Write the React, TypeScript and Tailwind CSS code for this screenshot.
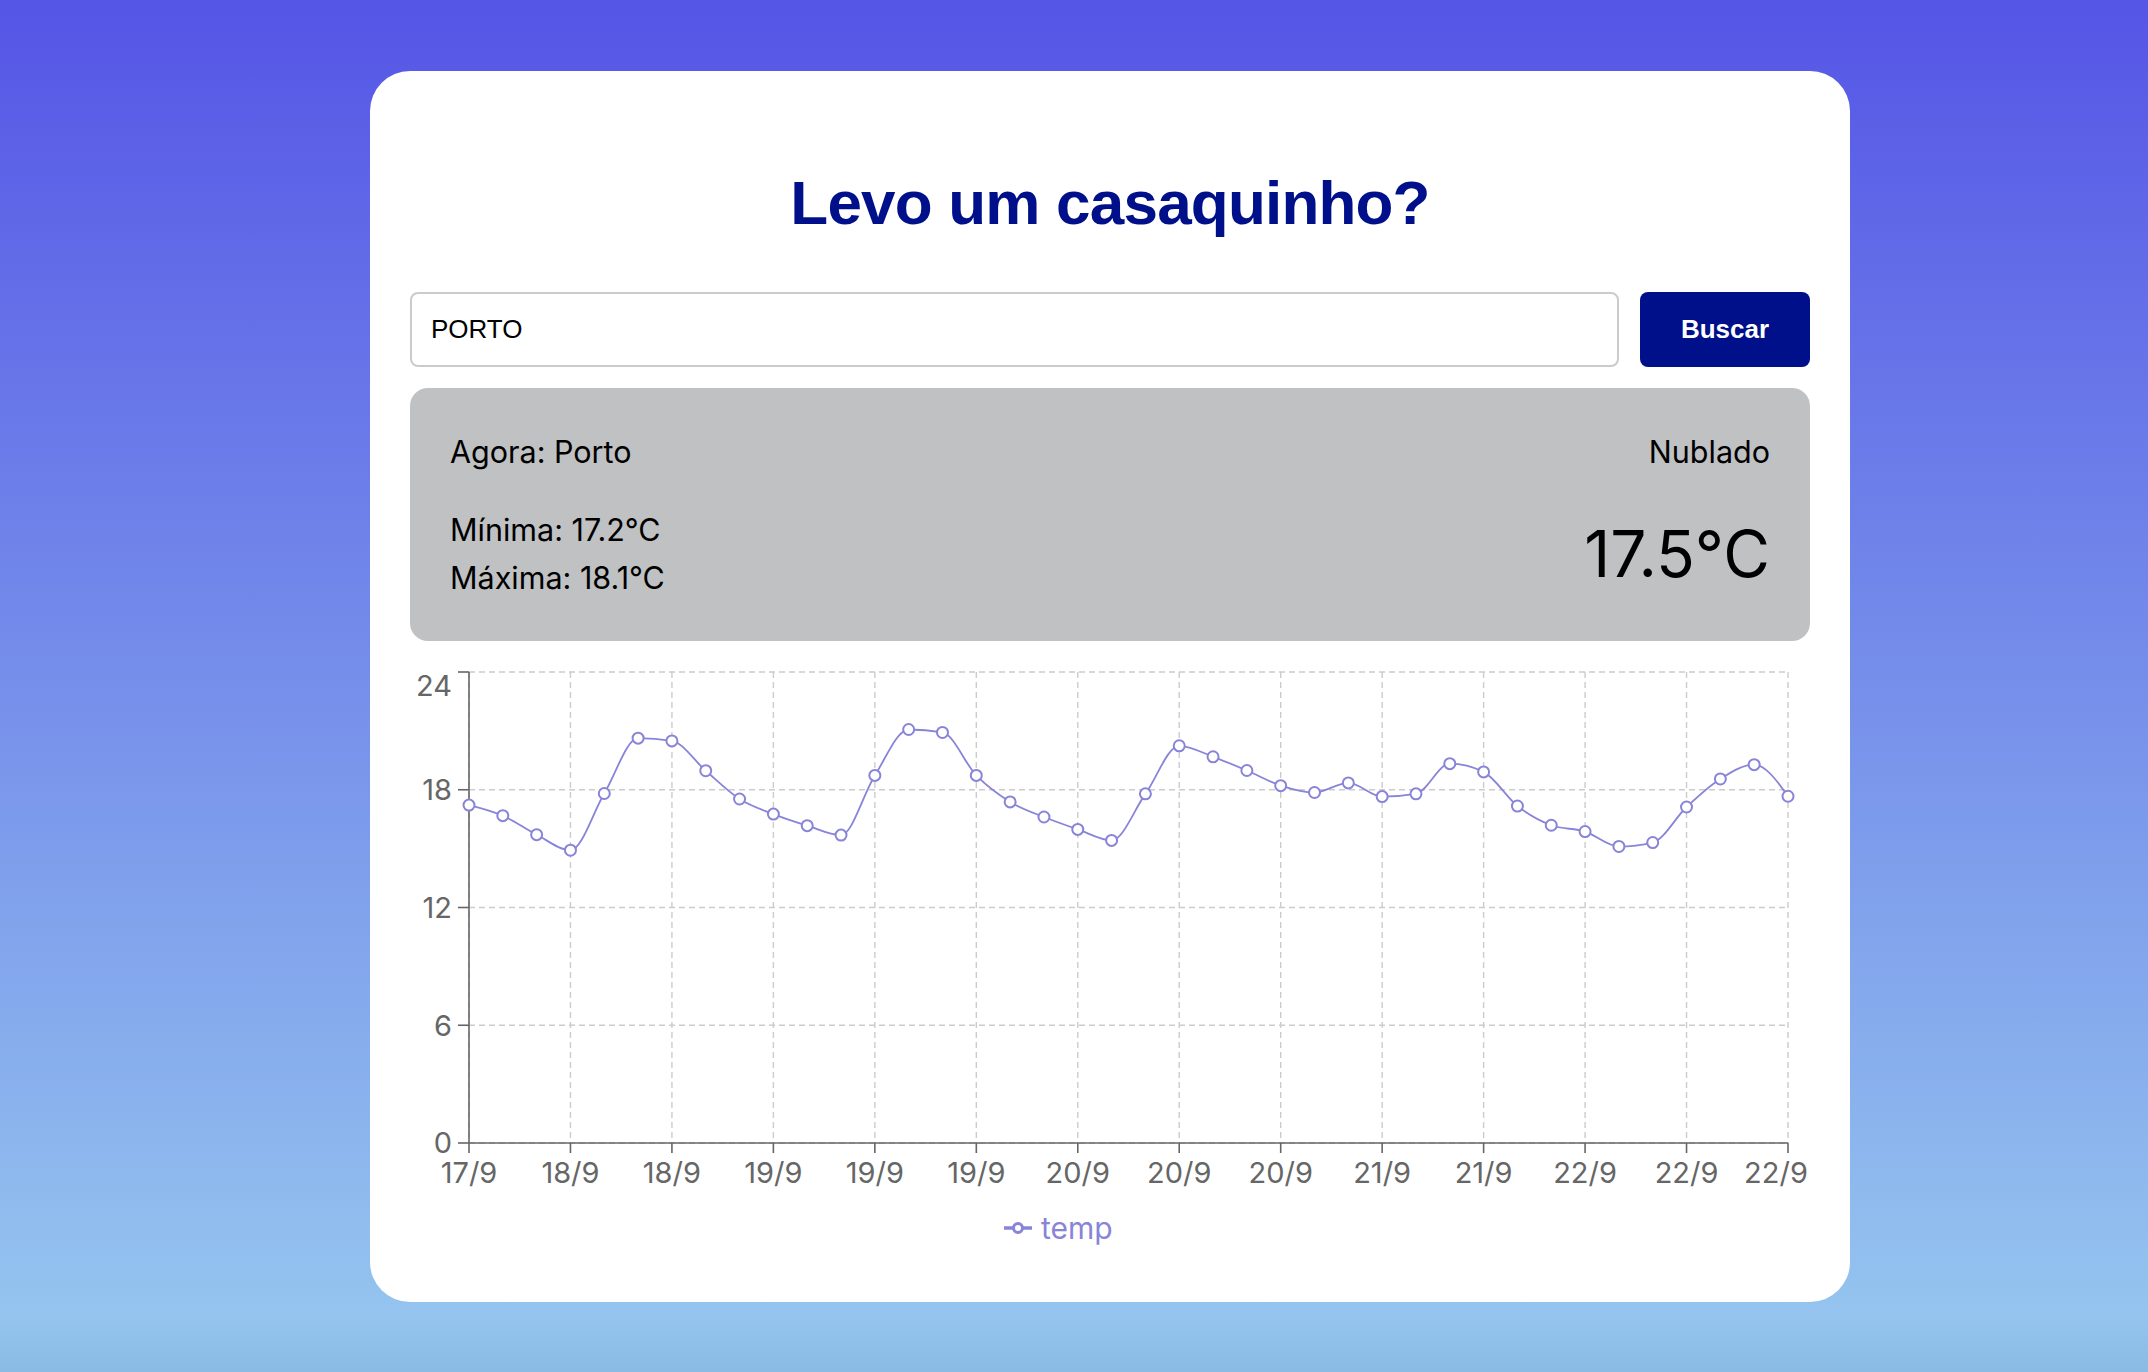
import React from 'react';

const temps = [
  17.22, 16.68, 15.71, 14.92, 17.81, 20.63, 20.49, 18.97, 17.53, 16.76,
  16.17, 15.69, 18.73, 21.07, 20.92, 18.73, 17.38, 16.61, 15.98, 15.42,
  17.79, 20.24, 19.68, 18.98, 18.21, 17.86, 18.35, 17.65, 17.79, 19.33,
  18.91, 17.17, 16.19, 15.87, 15.11, 15.31, 17.12, 18.55, 19.28, 17.67,
];

const ticks: { i: number; label: string }[] = [
  { i: 0, label: '17/9' }, { i: 3, label: '18/9' }, { i: 6, label: '18/9' },
  { i: 9, label: '19/9' }, { i: 12, label: '19/9' }, { i: 15, label: '19/9' },
  { i: 18, label: '20/9' }, { i: 21, label: '20/9' }, { i: 24, label: '20/9' },
  { i: 27, label: '21/9' }, { i: 30, label: '21/9' }, { i: 33, label: '22/9' },
  { i: 36, label: '22/9' }, { i: 39, label: '22/9' },
];

// plot area inside the svg
const X0 = 59;
const X1 = 1378;
const Y_TOP = 21;
const Y_BOT = 492;
const px = (i: number) => X0 + (i * (X1 - X0)) / (temps.length - 1);
const py = (v: number) => Y_BOT - (v / 24) * (Y_BOT - Y_TOP);

// same shape as d3 curveMonotoneX
function monotonePath(pts: [number, number][]) {
  const n = pts.length;
  const sign = (x: number) => (x < 0 ? -1 : 1);
  const t: number[] = new Array(n).fill(0);
  for (let i = 1; i < n - 1; i++) {
    const [x0, y0] = pts[i - 1];
    const [x1, y1] = pts[i];
    const [x2, y2] = pts[i + 1];
    const h0 = x1 - x0, h1 = x2 - x1;
    const s0 = (y1 - y0) / h0, s1 = (y2 - y1) / h1;
    const p = (s0 * h1 + s1 * h0) / (h0 + h1);
    t[i] = (sign(s0) + sign(s1)) * Math.min(Math.abs(s0), Math.abs(s1), 0.5 * Math.abs(p)) || 0;
  }
  const h = pts[1][0] - pts[0][0];
  t[0] = (3 * (pts[1][1] - pts[0][1]) / h - t[1]) / 2;
  const hl = pts[n - 1][0] - pts[n - 2][0];
  t[n - 1] = (3 * (pts[n - 1][1] - pts[n - 2][1]) / hl - t[n - 2]) / 2;
  let d = `M${pts[0][0]},${pts[0][1]}`;
  for (let i = 1; i < n; i++) {
    const [xa, ya] = pts[i - 1];
    const [xb, yb] = pts[i];
    const dx = (xb - xa) / 3;
    d += `C${xa + dx},${ya + dx * t[i - 1]},${xb - dx},${yb - dx * t[i]},${xb},${yb}`;
  }
  return d;
}

function TempChart() {
  const pts = temps.map((v, i) => [px(i), py(v)] as [number, number]);
  const yTicks = [0, 6, 12, 18, 24];
  const font = { fontFamily: 'Inter, "Noto Sans", sans-serif' };
  return (
    <svg width="1399" height="620" viewBox="0 0 1399 620" className="block" style={font}>
      {/* grid */}
      <g stroke="#cccccc" strokeWidth="1.4" strokeDasharray="6 4" fill="none">
        {yTicks.map(v => (
          <line key={'h' + v} x1={X0} x2={X1} y1={py(v)} y2={py(v)} />
        ))}
        {ticks.map(t => (
          <line key={'v' + t.i} x1={px(t.i)} x2={px(t.i)} y1={Y_TOP} y2={Y_BOT} />
        ))}
      </g>

      {/* y axis */}
      <line x1={X0} x2={X0} y1={Y_TOP} y2={Y_BOT} stroke="#666" strokeWidth="1.6" />
      {yTicks.map(v => (
        <g key={'yt' + v}>
          <line x1={X0 - 11} x2={X0} y1={py(v)} y2={py(v)} stroke="#666" strokeWidth="1.6" />
          <text
            x={42}
            y={v === 24 ? 35 : py(v)}
            dy="0.355em"
            textAnchor="end"
            fontSize="29"
            fill="#666"
          >
            {v}
          </text>
        </g>
      ))}

      {/* x axis */}
      <line x1={X0} x2={X1} y1={Y_BOT} y2={Y_BOT} stroke="#666" strokeWidth="1.6" />
      {ticks.map((t, k) => (
        <g key={'xt' + t.i}>
          <line x1={px(t.i)} x2={px(t.i)} y1={Y_BOT} y2={Y_BOT + 10} stroke="#666" strokeWidth="1.6" />
          <text
            x={k === ticks.length - 1 ? px(t.i) - 12 : px(t.i)}
            y={522}
            dy="0.355em"
            textAnchor="middle"
            fontSize="29"
            fill="#666"
          >
            {t.label}
          </text>
        </g>
      ))}

      {/* line + dots */}
      <path d={monotonePath(pts)} fill="none" stroke="#8884d8" strokeWidth="1.8" />
      {pts.map(([x, y], i) => (
        <circle key={i} cx={x} cy={y} r="5.5" fill="#fff" stroke="#8884d8" strokeWidth="2" />
      ))}

      {/* legend */}
      <line x1={594} x2={622} y1={577} y2={577} stroke="#8884d8" strokeWidth="3.5" />
      <circle cx={608} cy={577} r="4.5" fill="#fff" stroke="#8884d8" strokeWidth="3" />
      <text x={631} y={577} dy="0.355em" fontSize="30" fill="#8884d8">temp</text>
    </svg>
  );
}

export default function App() {
  return (
    <div className="min-h-screen w-full bg-[linear-gradient(180deg,rgba(0,0,0,0)_96%,rgba(70,120,170,0.18)_100%),linear-gradient(180deg,#5555e6_0%,#97c9ef_100%)]">
      <div className="flex justify-center pl-[72px] pt-[71px] pb-[71px]">
        <div className="w-[1480px] rounded-[40px] bg-white px-[40px] pt-[95px] pb-[31px]">
          <h1
            className="text-center text-[62px] leading-[74px] font-bold tracking-[-0.8px] text-[#00108a]"
            style={{ fontFamily: '"Liberation Sans", Arial, sans-serif' }}
          >
            Levo um casaquinho?
          </h1>

          <div className="mt-[52px] flex h-[75px] gap-[21px]" style={{ fontFamily: '"Liberation Sans", Arial, sans-serif' }}>
            <input
              defaultValue="PORTO"
              className="min-w-0 flex-1 rounded-[8px] border-2 border-[#cbcbcb] bg-white px-[19px] text-[26px] text-black outline-none"
            />
            <button className="w-[170px] rounded-[8px] bg-[#00108a] text-[26px] font-bold text-white">
              Buscar
            </button>
          </div>

          <div
            className="mt-[21px] flex h-[253px] justify-between rounded-[18px] bg-[#c0c1c3] px-[40px] pt-[46px] text-black"
            style={{ fontFamily: 'Inter, "Noto Sans", sans-serif' }}
          >
            <div className="text-[30.5px]">
              <div className="leading-[36px]">Agora: Porto</div>
              <div className="mt-[36px] leading-[48px]">Mínima: 17.2°C</div>
              <div className="leading-[48px]">Máxima: 18.1°C</div>
            </div>
            <div className="flex flex-col items-end">
              <div className="text-[30.5px] leading-[36px]">Nublado</div>
              <div className="mt-[52px] text-[64px] leading-[64px]">17.5°C</div>
            </div>
          </div>

          <div className="mt-[10px]">
            <TempChart />
          </div>
        </div>
      </div>
    </div>
  );
}
